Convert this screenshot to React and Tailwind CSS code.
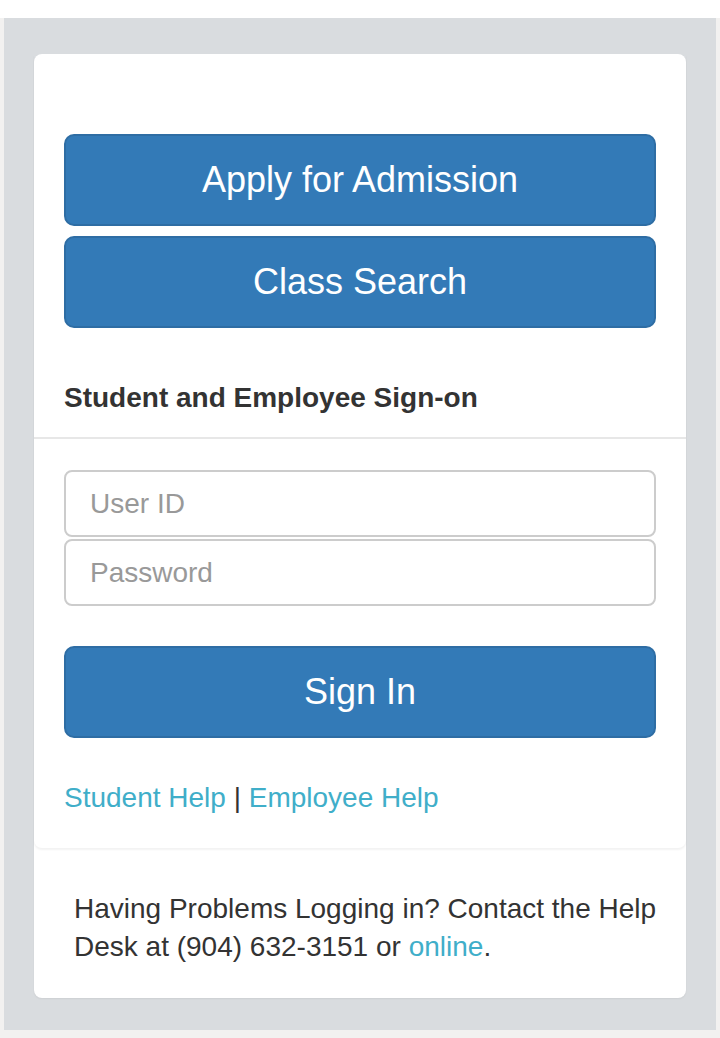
export default function App() {
  return (
    <div
      className="h-[1038px] bg-white flex flex-col text-[#333]"
      style={{ fontFamily: '"Liberation Sans", Arial, sans-serif' }}
    >
      <div className="h-[18px] shrink-0" />
      <div className="flex-1 bg-[#f2f1f0] px-[4px] pb-[8px]">
        <div className="h-full bg-[#d9dcdf] pt-[36px] px-[30px]">
          {/* Card */}
          <div className="bg-white rounded-[8px] shadow-[0_1px_2px_rgba(0,0,0,0.06)]">
            <div className="rounded-b-[8px] shadow-[0_2px_2px_rgba(0,0,0,0.05)]">
              <div className="pt-[80px] px-[30px] flex flex-col gap-[10px]">
                <button className="h-[92px] w-full rounded-[10px] bg-[#337ab7] border-2 border-[#2e6da4] text-white text-[36px] leading-none">
                  Apply for Admission
                </button>
                <button className="h-[92px] w-full rounded-[10px] bg-[#337ab7] border-2 border-[#2e6da4] text-white text-[36px] leading-none">
                  Class Search
                </button>
              </div>

              <div className="mt-[50px] px-[30px] pb-[19px] border-b-2 border-[#e7e7e7]">
                <h3 className="text-[28px] leading-[40px] font-bold text-[#333]">
                  Student and Employee Sign-on
                </h3>
              </div>

              <div className="px-[30px] pt-[31px] pb-[30px]">
                <input
                  type="text"
                  placeholder="User ID"
                  className="block w-full h-[67px] rounded-[8px] border-2 border-[#ccc] px-[24px] text-[28px] placeholder:text-[#999] outline-none"
                />
                <input
                  type="password"
                  placeholder="Password"
                  className="block w-full h-[67px] mt-[2px] rounded-[8px] border-2 border-[#ccc] px-[24px] text-[28px] placeholder:text-[#999] outline-none"
                />
                <button className="mt-[40px] h-[92px] w-full rounded-[10px] bg-[#337ab7] border-2 border-[#2e6da4] text-white text-[36px] leading-none">
                  Sign In
                </button>
                <p className="mt-[40px] text-[28px] leading-[40px]">
                  <a className="text-[#40aec9]">Student Help</a> |{" "}
                  <a className="text-[#40aec9]">Employee Help</a>
                </p>
              </div>
            </div>

            <div className="pl-[40px] pr-[24px] pt-[42px] pb-[32px]">
              <p className="text-[28px] leading-[38px] text-[#333]">
                Having Problems Logging in? Contact the Help Desk at (904)
                632-3151 or <a className="text-[#40aec9]">online</a>.
              </p>
            </div>
          </div>
        </div>
      </div>
    </div>
  );
}
